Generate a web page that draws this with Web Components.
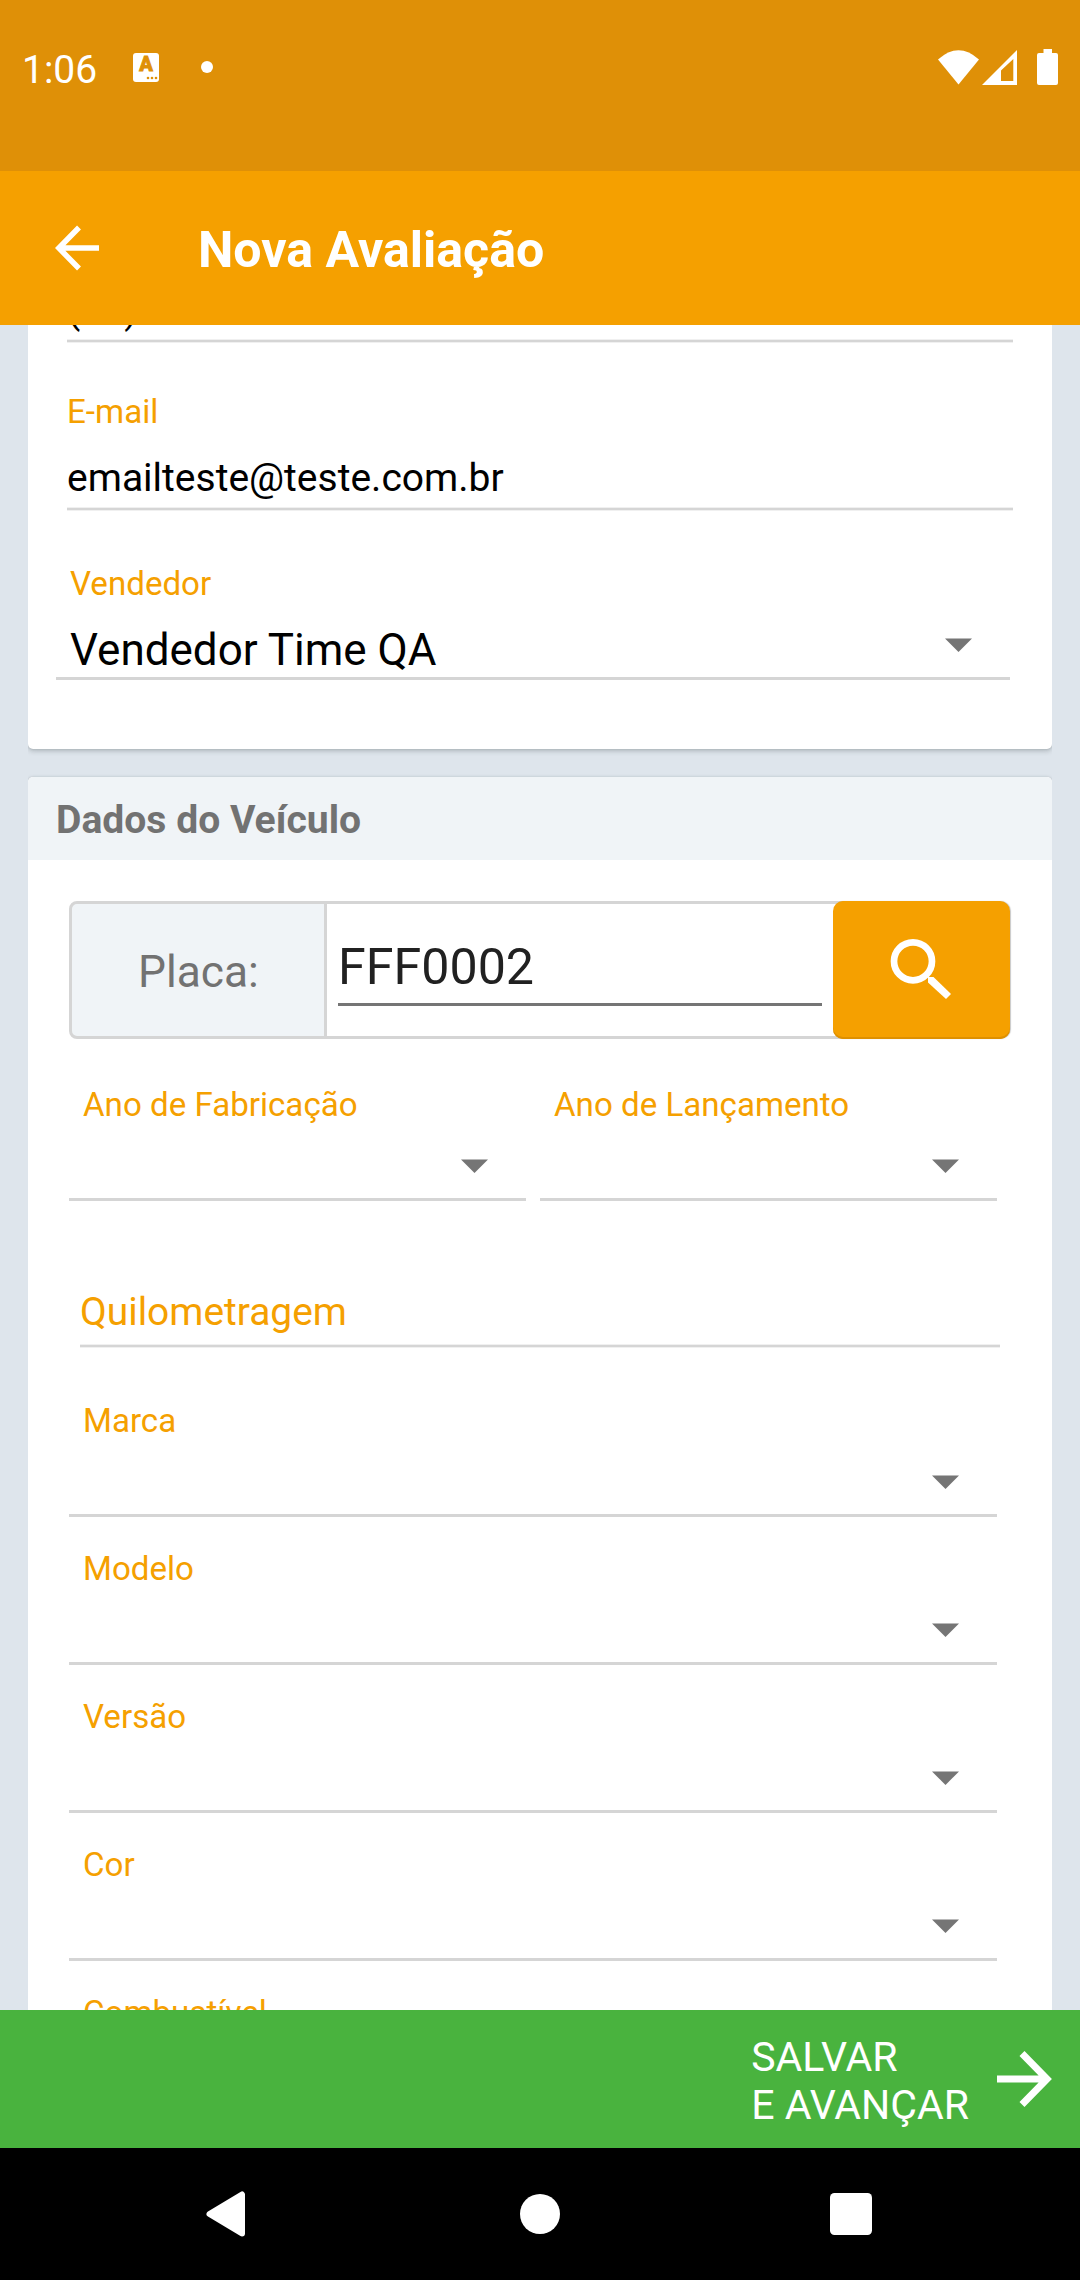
<!DOCTYPE html>
<html lang="pt-BR">
<head>
<meta charset="utf-8">
<title>Nova Avaliação</title>
<style>
html, body { margin: 0; padding: 0; }
body { width: 1080px; height: 2280px; overflow: hidden; font-family: Roboto, "Liberation Sans", sans-serif; background: #dee5ec; }
.pair { display: grid; grid-template-columns: 457px 457px; gap: 14px; }
</style>
</head>
<body>
<app-screen>
  <status-bar slot="top" time="1:06"></status-bar>
  <app-bar slot="top">Nova Avaliação</app-bar>

  <form-card style="--pad:0 42px 69px 28px; margin-top:-38px">
    <text-field style="margin-left:11px;width:946px">(11)</text-field>
    <text-field label="E-mail" style="margin:49px 0 0 11px;width:946px">emailteste@teste.com.br</text-field>
    <select-field label="Vendedor" style="margin-top:53px">Vendedor Time QA</select-field>
  </form-card>

  <form-card heading="Dados do Veículo" style="--pad:41px 42px 40px 41px">
    <plate-search label="Placa:">FFF0002</plate-search>
    <div class="pair" style="margin-top:46px">
      <select-field label="Ano de Fabricação"></select-field>
      <select-field label="Ano de Lançamento"></select-field>
    </div>
    <text-field empty style="margin:88px 0 0 11px;width:920px">Quilometragem</text-field>
    <select-field label="Marca" style="margin:53px 13px 0 0"></select-field>
    <select-field label="Modelo" style="margin:32px 13px 0 0"></select-field>
    <select-field label="Versão" style="margin:32px 13px 0 0"></select-field>
    <select-field label="Cor" style="margin:32px 13px 0 0"></select-field>
    <select-field label="Combustível" style="margin:32px 13px 0 0"></select-field>
  </form-card>

  <save-bar slot="bottom">SALVAR<br>E AVANÇAR</save-bar>
  <nav-bar slot="bottom"></nav-bar>
</app-screen>

<script>
// Shared base: fills an open shadow root from the subclass's markup.
class Base extends HTMLElement {
  constructor() {
    super();
    this.attachShadow({ mode: 'open' });
  }
  connectedCallback() {
    this.shadowRoot.innerHTML = '<style>*{box-sizing:border-box}svg{display:block;flex:none}' + this.css() + '</style>' + this.view();
  }
}

customElements.define('app-screen', class extends Base {
  css() { return `
    :host { display:flex; flex-direction:column; width:1080px; height:2280px; }
    header, footer { flex:none; }
    main { flex:1; min-height:0; overflow:hidden; padding:0 28px; background:#dee5ec; display:flex; flex-direction:column; gap:28px; }`; }
  view() { return '<header><slot name="top"></slot></header><main><slot></slot></main><footer><slot name="bottom"></slot></footer>'; }
});

customElements.define('status-bar', class extends Base {
  css() { return `
    :host { display:flex; align-items:flex-start; height:171px; padding:0 22px; background:#df9007; color:#fff; box-sizing:border-box; }
    .time { font-size:39px; line-height:46px; margin-top:47px; width:111px; }
    .lang { width:26px; height:29px; margin-top:53px; border-radius:3px; background:#fff; color:#df9007; display:flex; flex-direction:column; align-items:center; }
    .lang b { font-size:20px; line-height:23px; font-weight:900; -webkit-text-stroke:.8px #df9007; }
    .dot { width:12px; height:12px; border-radius:50%; background:#fff; margin:61px 0 0 42px; }
    .sys { margin:48px 0 0 auto; }`; }
  view() { return `
    <span class="time">${this.getAttribute('time')}</span>
    <span class="lang"><b>A</b><svg width="26" height="4" viewBox="0 0 26 4"><g fill="#df9007"><circle cx="15" cy="2" r="1.3"/><circle cx="19" cy="2" r="1.3"/><circle cx="23" cy="2" r="1.3"/></g></svg></span>
    <span class="dot"></span>
    <svg class="sys" width="122" height="38" viewBox="0 0 122 38" fill="#fff">
      <path d="M2 11.500 Q22.500 -7 43 11.500 L22.500 36.500 Z"/>
      <path fill-rule="evenodd" d="M46 37 L81 2 V37 Z M65 22.500 V33 H77.300 V11 Z"/>
      <path d="M107.500 1 H116 V5 H120 a2 2 0 0 1 2 2 V35 a2 2 0 0 1 -2 2 H103 a2 2 0 0 1 -2 -2 V7 a2 2 0 0 1 2 -2 H107.500 Z"/>
    </svg>`; }
});

customElements.define('app-bar', class extends Base {
  css() { return `
    :host { display:flex; height:154px; background:#f5a000; color:#fff; padding-left:55px; box-sizing:border-box; }
    svg { margin-top:54px; }
    h1 { margin:50px 0 0 99px; font-size:50.100px; line-height:58px; font-weight:700; }`; }
  view() { return `<svg width="44" height="46" viewBox="0 0 44 46" fill="none" stroke="#fff" stroke-width="5.500"><path d="M44 23 H5 M24 2.500 L3.800 23 L24 43.500"/></svg><h1><slot></slot></h1>`; }
});

customElements.define('form-card', class extends Base {
  css() { return `
    :host { display:block; flex:none; background:#fff; border-radius:5px; box-shadow:0 2px 5px rgba(40,50,50,.26), 0 0 2px rgba(40,50,50,.16); clip-path:inset(-12px 0); }
    h2 { margin:0; height:83px; padding:20px 28px 0; border-radius:5px 5px 0 0; background:#f0f4f7; color:#727272; font-size:39.1px; line-height:46px; font-weight:700; }
    .body { padding:var(--pad); }`; }
  view() {
    const h = this.getAttribute('heading');
    return (h ? `<h2>${h}</h2>` : '') + '<div class="body"><slot></slot></div>';
  }
});

customElements.define('text-field', class extends Base {
  css() { return `
    :host { display:flex; flex-direction:column; color:#000; }
    label { font-size:33.2px; line-height:39px; color:#f5a000; margin-bottom:24px; }
    .value { font-size:39px; line-height:46px; padding-bottom:6px; }
    :host([empty]) .value { color:#f5a000; font-size:38.900px; padding-bottom:9px; }
    .line { height:4px; background:#d5d5d5; border:solid #f0f0f0; border-width:1px 0; }`; }
  view() {
    const l = this.getAttribute('label');
    return (l ? `<label>${l}</label>` : '') + '<div class="value"><slot></slot></div><div class="line"></div>';
  }
});

customElements.define('select-field', class extends Base {
  css() { return `
    :host { display:flex; flex-direction:column; height:116px; border-bottom:3px solid #d5d5d5; box-sizing:border-box; color:#000; }
    label { font-size:33.12px; line-height:39px; color:#f5a000; padding-left:14px; }
    .row { display:flex; justify-content:space-between; padding:0 38px 0 14px; }
    .value { font-size:44px; line-height:52px; margin-top:21px; }
    svg { margin-top:35px; }`; }
  view() { return `<label>${this.getAttribute('label')}</label>
    <div class="row"><span class="value"><slot></slot></span><svg width="27" height="14" viewBox="0 0 27 14"><path d="M0 .4 H27 L13.500 14 Z" fill="#757575"/></svg></div>`; }
});

customElements.define('plate-search', class extends Base {
  css() { return `
    :host { display:flex; height:138px; border-radius:8px; }
    .tag { width:258px; padding:42px 0 0 66px; border:3px solid #d5d5d5; border-radius:8px 0 0 8px; background:#f0f4f7; color:#727272; font-size:44.300px; line-height:52px; }
    .input { flex:1; border:solid #d5d5d5; border-width:3px 0; margin-right:-12px; padding:34px 23px 0 11px; color:#212121; }
    .input div { font-size:50.200px; line-height:58px; height:68px; border-bottom:3px solid #757575; }
    button { position:relative; flex:none; display:flex; align-items:flex-start; width:177px; height:138px; border:0; border-radius:10px; background:#f5a000; box-shadow:inset 0 -2px 0 #de9000, 1px 0 1px rgba(0,0,0,.22); padding:37px 0 0 57px; }`; }
  view() { return `<div class="tag">${this.getAttribute('label')}</div><div class="input"><div><slot></slot></div></div>
    <button aria-label="Buscar"><svg width="62" height="62" viewBox="0 0 62 62"><circle cx="23" cy="23.300" r="19" fill="none" stroke="#fff" stroke-width="6.700"/><path d="M38 39 H43.500 L61 56 L56 61 L38 44.500 Z" fill="#fff"/></svg></button>`; }
});

customElements.define('save-bar', class extends Base {
  css() { return `
    :host { display:flex; justify-content:flex-end; height:138px; background:#49b33e; color:#fff; padding-right:28px; box-sizing:border-box; }
    span { font-size:41px; line-height:48px; margin:23px 28px 0 0; }
    svg { margin-top:40px; }`; }
  view() { return `<span><slot></slot></span><svg width="55" height="58" viewBox="0 0 55 58" fill="none" stroke="#fff" stroke-width="7"><path d="M0 29 H49 M25 3.500 L50 29 L25 54.500"/></svg>`; }
});

customElements.define('nav-bar', class extends Base {
  css() { return `
    :host { display:grid; grid-template-columns:314px 1fr 290px; align-items:center; height:132px; background:#000; padding-left:206px; box-sizing:border-box; }
    svg { display:block; }
    .sq { margin-left:40px; }`; }
  view() { return `
    <svg width="40" height="46" viewBox="0 0 40 46"><path d="M3.500 23 L36 3.500 V42.500 Z" fill="#fff" stroke="#fff" stroke-width="6" stroke-linejoin="round"/></svg>
    <svg width="40" height="40" viewBox="0 0 40 40"><circle cx="20" cy="20" r="20" fill="#fff"/></svg>
    <svg class="sq" width="42" height="42" viewBox="0 0 42 42"><rect width="42" height="42" rx="4.500" fill="#fff"/></svg>`; }
});
</script>
</body>
</html>
